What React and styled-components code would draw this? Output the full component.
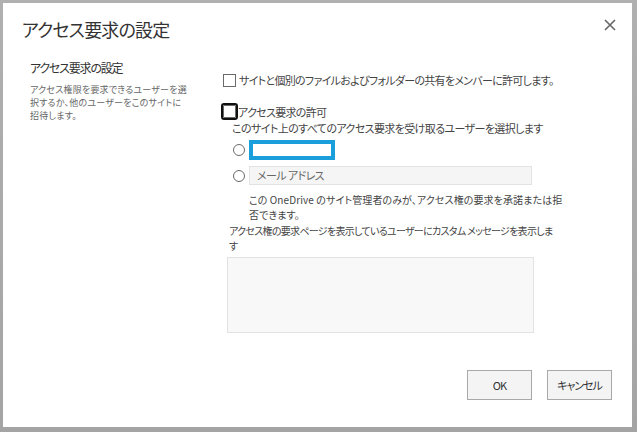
import styled, { createGlobalStyle } from "styled-components";

const Global = createGlobalStyle`
  html, body {
    margin: 0;
    padding: 0;
    background: #a9a9a9;
  }
  body {
    font-family: "Noto Sans CJK JP", "Noto Sans", sans-serif;
    font-feature-settings: "palt";
  }
`;

const Frame = styled.div`
  width: 637px;
  height: 432px;
  box-sizing: border-box;
  padding: 3px 5px 5px 3px;
  background: linear-gradient(to bottom, #b0b0b0, #a4a4a4);
`;

const Dialog = styled.div`
  height: 100%;
  background: #fff;
  display: flex;
  flex-direction: column;
  box-sizing: border-box;
  color: #444;
`;

const Header = styled.div`
  display: flex;
  justify-content: space-between;
  align-items: flex-start;
  padding: 13px 15px 0 19px;
  height: 46px;
  box-sizing: border-box;
`;

const Title = styled.h1`
  margin: 0;
  font-size: 18px;
  font-weight: 400;
  letter-spacing: -0.8px;
  color: #333;
  line-height: 26px;
`;

const Close = styled.button`
  border: none;
  background: none;
  padding: 0;
  margin-top: 3px;
  width: 14px;
  height: 14px;
  cursor: pointer;
`;

const Body = styled.div`
  display: grid;
  grid-template-columns: 175px 1fr;
  column-gap: 16px;
  padding: 0 0 0 27px;
  flex: 1;
`;

const Side = styled.div`
  padding-top: 11px;
`;

const SideTitle = styled.div`
  font-size: 12px;
  letter-spacing: -1.2px;
  color: #333;
  line-height: 16px;
  margin-bottom: 7px;
`;

const SideText = styled.p`
  margin: 0;
  font-size: 9px;
  letter-spacing: 0.2px;
  line-height: 13px;
  color: #666;
`;

const Main = styled.div`
  display: flex;
  flex-direction: column;
  padding-top: 23px;
`;

const CheckRow = styled.label`
  display: flex;
  align-items: center;
  gap: ${(p) => (p.$focused ? "0" : "3px")};
  font-size: 11px;
  letter-spacing: -0.7px;
  line-height: 16px;
  margin-left: ${(p) => (p.$focused ? "0" : "2px")};
  margin-top: ${(p) => p.$top || 0}px;
`;

const Box = styled.span`
  width: 11px;
  height: 11px;
  border: 1px solid #6a6a6a;
  background: #fff;
  flex: none;
  ${(p) =>
    p.$focused &&
    `
    outline: 2px solid #111;
    outline-offset: 0;
    margin: 2px;
    border-radius: 1px;
  `}
`;

const Text = styled.div`
  font-size: 11px;
  letter-spacing: -0.6px;
  line-height: 16px;
  margin-left: ${(p) => p.$indent || 0}px;
  margin-top: ${(p) => p.$top || 0}px;
`;

const Note = styled.div`
  font-size: 10px;
  letter-spacing: ${(p) => p.$spacing || 0}px;
  line-height: 14.5px;
  margin-left: ${(p) => p.$indent || 0}px;
  margin-top: ${(p) => p.$top || 0}px;
`;

const RadioRow = styled.div`
  display: flex;
  align-items: center;
  gap: 4px;
  margin-left: 12px;
  margin-top: ${(p) => p.$top || 0}px;
`;

const Radio = styled.span`
  width: 10px;
  height: 10px;
  border: 1px solid #6a6a6a;
  border-radius: 50%;
  flex: none;
`;

const PeopleBox = styled.div`
  width: 78px;
  height: 12px;
  border: 4px solid #1a9fdc;
  background: #fff;
`;

const Input = styled.div`
  width: 274px;
  height: 17px;
  border: 1px solid #e3e3e3;
  background: #f5f5f5;
  color: #666;
  font-size: 11px;
  letter-spacing: -0.6px;
  line-height: 17px;
  padding-left: 7px;
`;

const TextArea = styled.div`
  width: 305px;
  height: 74px;
  border: 1px solid #e2e2e2;
  background: #f8f8f8;
  margin-left: 6px;
  margin-top: 4px;
`;

const Footer = styled.div`
  display: flex;
  justify-content: flex-end;
  gap: 15px;
  padding: 0 20px 27px 0;
`;

const Button = styled.button`
  width: 65px;
  height: 30px;
  border: 1px solid #a8a8a8;
  background: #f4f4f4;
  color: #333;
  font-family: inherit;
  font-feature-settings: "palt";
  font-size: 11px;
  letter-spacing: -1px;
  padding: 0;
`;

export default function App() {
  return (
    <>
      <Global />
      <Frame>
        <Dialog>
          <Header>
            <Title>アクセス要求の設定</Title>
            <Close aria-label="閉じる">
              <svg width="12" height="12" viewBox="0 0 12 12">
                <path d="M1 1 L11 11 M11 1 L1 11" stroke="#666" strokeWidth="1.6" />
              </svg>
            </Close>
          </Header>
          <Body>
            <Side>
              <SideTitle>アクセス要求の設定</SideTitle>
              <SideText>
                アクセス権限を要求できるユーザーを選
                <br />
                択するか、他のユーザーをこのサイトに
                <br />
                招待します。
              </SideText>
            </Side>
            <Main>
              <CheckRow>
                <Box />
                サイトと個別のファイルおよびフォルダーの共有をメンバーに許可します。
              </CheckRow>
              <CheckRow $focused $top={15}>
                <Box $focused />
                アクセス要求の許可
              </CheckRow>
              <Text $indent={11} $top={0}>
                このサイト上のすべてのアクセス要求を受け取るユーザーを選択します
              </Text>
              <RadioRow $top={4}>
                <Radio />
                <PeopleBox />
              </RadioRow>
              <RadioRow $top={6}>
                <Radio />
                <Input>メール アドレス</Input>
              </RadioRow>
              <Note $indent={28} $top={8} $spacing={0.1}>
                この OneDrive のサイト管理者のみが、アクセス権の要求を承諾または拒
                <br />
                否できます。
              </Note>
              <Note $indent={8} $top={2} $spacing={-0.7}>
                アクセス権の要求ページを表示しているユーザーにカスタム メッセージを表示しま
                <br />す
              </Note>
              <TextArea />
            </Main>
          </Body>
          <Footer>
            <Button>OK</Button>
            <Button>キャンセル</Button>
          </Footer>
        </Dialog>
      </Frame>
    </>
  );
}
